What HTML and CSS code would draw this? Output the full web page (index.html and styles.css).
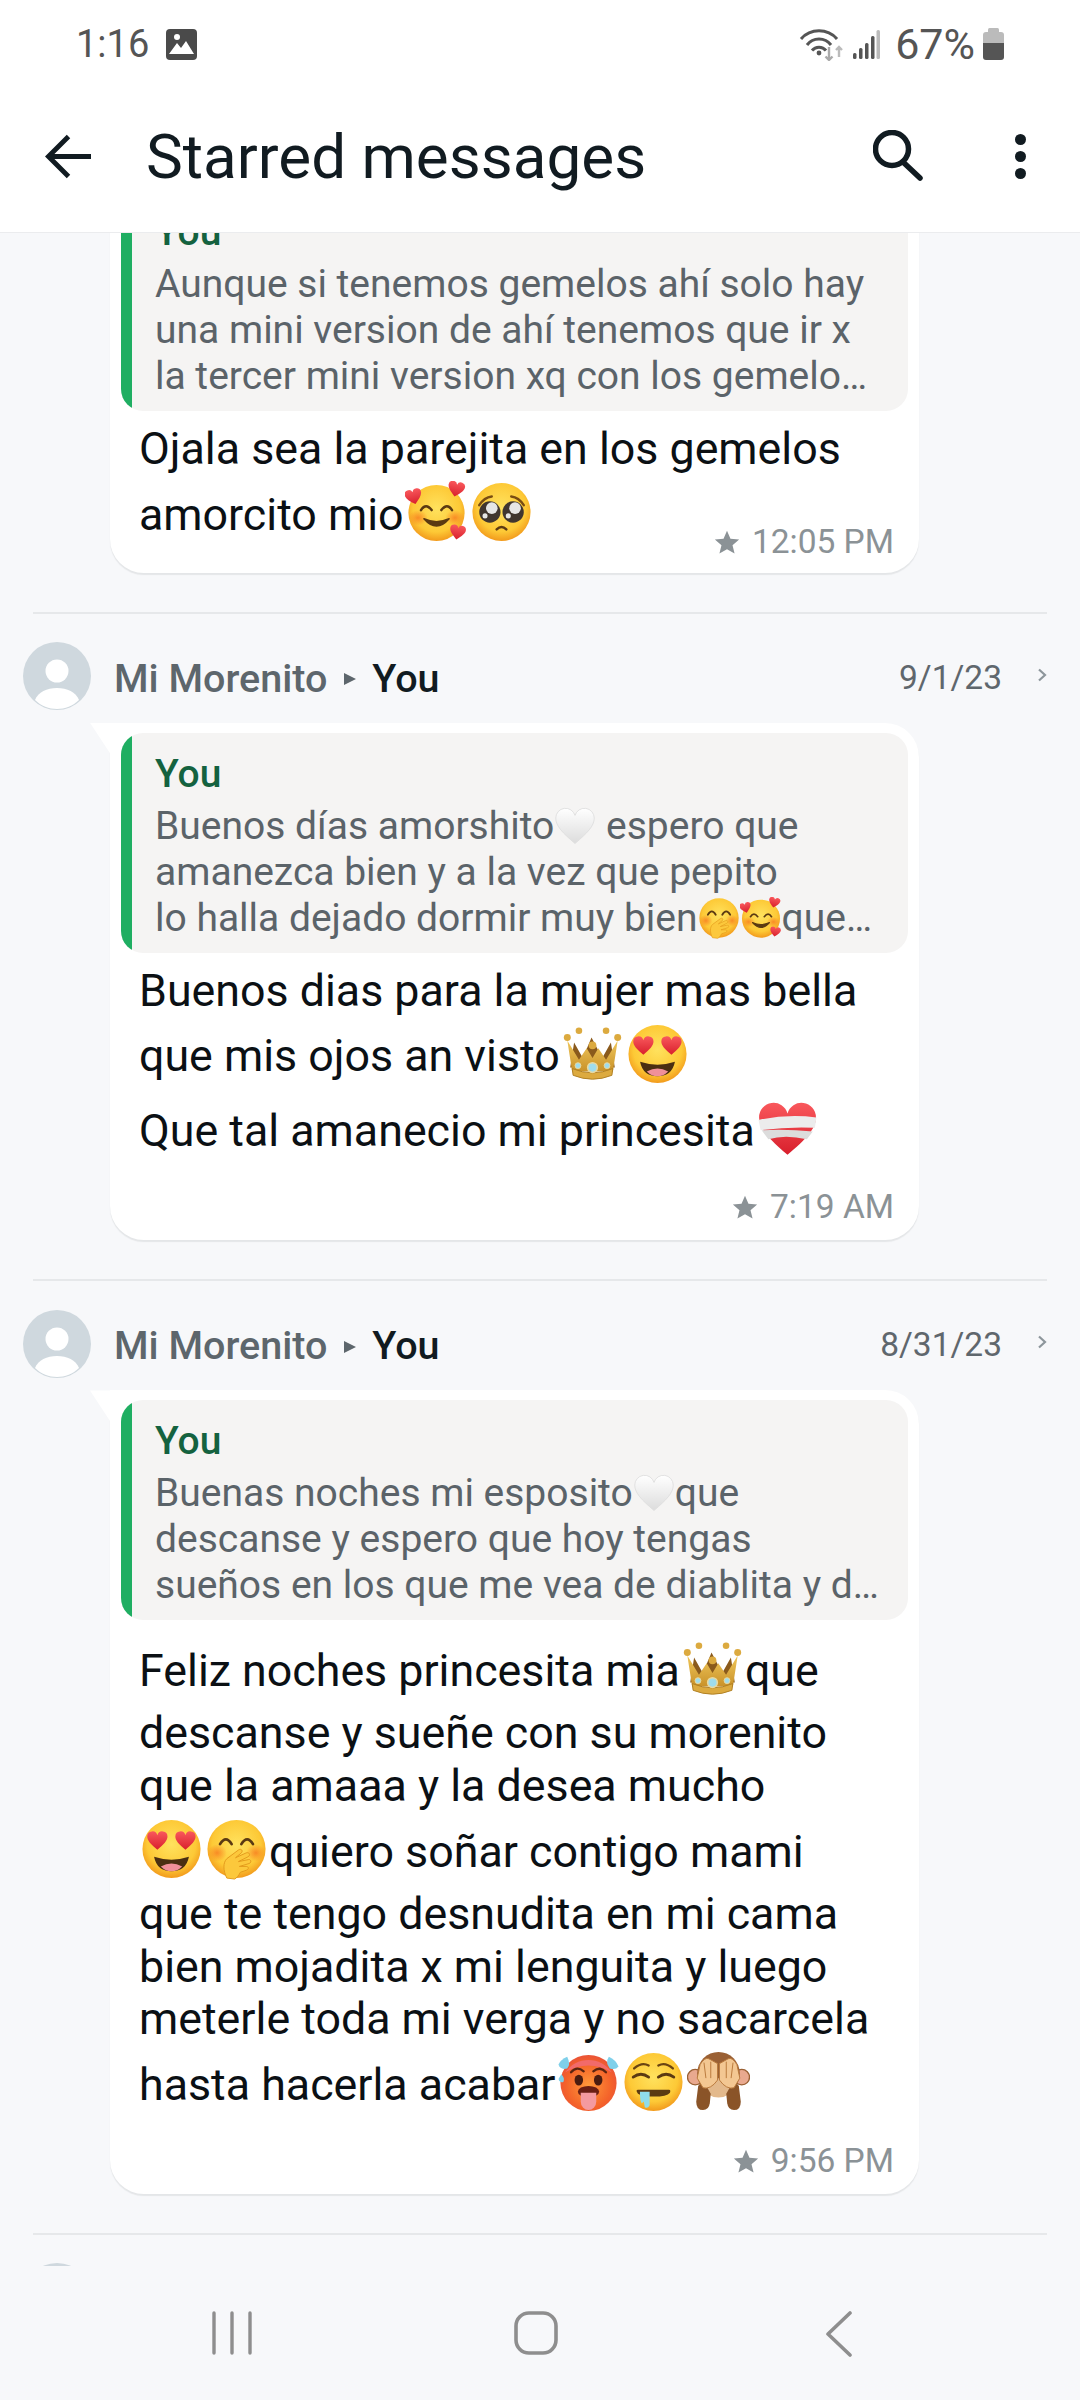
FILE: index.html
```html
<!DOCTYPE html>
<html lang="en">
<head>
    <meta charset="UTF-8">
    <meta name="viewport" content="width=device-width, initial-scale=1.0">
    <title>Starred messages</title>
    <link rel="stylesheet" href="styles.css">
</head>
<body>
    <!-- Shared emoji drawings -->
    <svg class="sprite" xmlns="http://www.w3.org/2000/svg" aria-hidden="true">
        <defs>
            <radialGradient id="face" cx="50%" cy="42%" r="58%">
                <stop offset="0" stop-color="#ffe25e"/>
                <stop offset="0.72" stop-color="#fdc936"/>
                <stop offset="1" stop-color="#f29a1c"/>
            </radialGradient>
            <radialGradient id="hot" cx="50%" cy="55%" r="58%">
                <stop offset="0" stop-color="#ff9a3a"/>
                <stop offset="0.7" stop-color="#f4622a"/>
                <stop offset="1" stop-color="#e8503a"/>
            </radialGradient>
            <radialGradient id="blush">
                <stop offset="0" stop-color="#f7761e" stop-opacity="0.75"/>
                <stop offset="1" stop-color="#f7761e" stop-opacity="0"/>
            </radialGradient>
            <linearGradient id="redHeart" x1="0" y1="0" x2="0" y2="1">
                <stop offset="0" stop-color="#f9585c"/>
                <stop offset="1" stop-color="#d81f2c"/>
            </linearGradient>
            <linearGradient id="whiteHeart" x1="0" y1="0" x2="0" y2="1">
                <stop offset="0" stop-color="#ffffff"/>
                <stop offset="1" stop-color="#dcdcdc"/>
            </linearGradient>
            <linearGradient id="gold" x1="0" y1="0" x2="0" y2="1">
                <stop offset="0" stop-color="#f0c75a"/>
                <stop offset="1" stop-color="#c9922a"/>
            </linearGradient>
            <path id="heartShape" d="M12 22C5 16 1 12 1 7.5A5.6 5.6 0 0 1 12 6A5.6 5.6 0 0 1 23 7.5C23 12 19 16 12 22Z"/>
            <path id="handShape" fill="#fcc83c" stroke="#e39a1c" stroke-width="1" d="M22 62C18 54 18 46 22 42L34 33C37 31 39 34 37 36L31 41L42 36C45 35 47 38 44 40L34 45L44 43C47 42 48 46 45 47L35 50L42 50C45 50 45 53 42 54L36 56C34 60 32 62 30 63Z"/>
        </defs>

        <symbol id="em-hearts" viewBox="0 0 64 64">
            <circle cx="32" cy="33" r="29" fill="url(#face)"/>
            <ellipse cx="13" cy="38" rx="10" ry="8" fill="url(#blush)"/>
            <ellipse cx="51" cy="38" rx="10" ry="8" fill="url(#blush)"/>
            <path d="M16 30Q21 22 27 30M37 30Q43 22 48 30" fill="none" stroke="#5b3a12" stroke-width="2.6" stroke-linecap="round"/>
            <path d="M19 39Q32 54 45 39Q32 45 19 39Z" fill="#5b3a12" stroke="#5b3a12" stroke-width="1.6" stroke-linejoin="round"/>
            <use href="#heartShape" fill="url(#redHeart)" transform="translate(-1 7) rotate(-14 9 9) scale(.78)"/>
            <use href="#heartShape" fill="url(#redHeart)" transform="translate(43 -1) rotate(12 9 9) scale(.78)"/>
            <use href="#heartShape" fill="url(#redHeart)" transform="translate(45 44) rotate(10 8 8) scale(.74)"/>
        </symbol>

        <symbol id="em-plead" viewBox="0 0 64 64">
            <circle cx="32" cy="32" r="30" fill="url(#face)"/>
            <path d="M9 25Q14 17 22 16M55 25Q50 17 42 16" fill="none" stroke="#7a4d12" stroke-width="2.4" stroke-linecap="round"/>
            <circle cx="20" cy="32" r="11" fill="#40362f"/>
            <circle cx="44" cy="32" r="11" fill="#40362f"/>
            <circle cx="22" cy="28" r="6" fill="#e6e6e6"/>
            <circle cx="46" cy="28" r="6" fill="#e6e6e6"/>
            <circle cx="15" cy="36" r="2.6" fill="#e6e6e6"/>
            <circle cx="39" cy="36" r="2.6" fill="#e6e6e6"/>
            <path d="M27 50Q32 45 37 50" fill="none" stroke="#5b3a12" stroke-width="2.6" stroke-linecap="round"/>
        </symbol>

        <symbol id="em-white" viewBox="0 0 24 24">
            <use href="#heartShape" fill="url(#whiteHeart)" stroke="#dedede" stroke-width=".5"/>
        </symbol>

        <symbol id="em-giggle" viewBox="0 0 64 64">
            <circle cx="32" cy="32" r="30" fill="url(#face)"/>
            <ellipse cx="12" cy="36" rx="10" ry="9" fill="url(#blush)"/>
            <ellipse cx="52" cy="36" rx="10" ry="9" fill="url(#blush)"/>
            <path d="M15 27Q21 17 27 27M37 27Q43 17 49 27" fill="none" stroke="#5b3a12" stroke-width="2.8" stroke-linecap="round"/>
            <use href="#handShape"/>
        </symbol>

        <symbol id="em-crown" viewBox="0 0 64 64">
            <path d="M13 20L22 36L31 15L42 36L51 20L55 46H9Z" fill="#8a5a1c"/>
            <path d="M6 18L18 38L26 26L32 36L38 26L46 38L58 18L53 50H11Z" fill="url(#gold)"/>
            <path d="M11 47Q32 56 53 47L52 54Q32 62 12 54Z" fill="#dcaa3f" stroke="#b07f22" stroke-width="1"/>
            <circle cx="6" cy="15" r="3.6" fill="#dcaa3f"/>
            <circle cx="58" cy="15" r="3.6" fill="#dcaa3f"/>
            <circle cx="18" cy="8" r="3.4" fill="#dcaa3f"/>
            <circle cx="46" cy="8" r="3.4" fill="#dcaa3f"/>
            <circle cx="32" cy="23" r="4" fill="#dcaa3f"/>
            <circle cx="32" cy="46" r="5" fill="#9fdcec" stroke="#e9d9a0" stroke-width="1.6"/>
            <circle cx="17" cy="44" r="3" fill="#9fdcec" stroke="#e9d9a0"/>
            <circle cx="47" cy="44" r="3" fill="#9fdcec" stroke="#e9d9a0"/>
        </symbol>

        <symbol id="em-eyes" viewBox="0 0 64 64">
            <circle cx="32" cy="32" r="30" fill="url(#face)"/>
            <use href="#heartShape" fill="url(#redHeart)" transform="translate(6 12) scale(.95)"/>
            <use href="#heartShape" fill="url(#redHeart)" transform="translate(35 12) scale(.95)"/>
            <path d="M14 40Q32 46 50 40Q47 55 32 55Q17 55 14 40Z" fill="#4a2f12"/>
            <path d="M21 50Q32 44 43 50Q38 55 32 55Q26 55 21 50Z" fill="#f0909a"/>
        </symbol>

        <symbol id="em-mend" viewBox="0 0 24 24">
            <use href="#heartShape" fill="url(#redHeart)"/>
            <path d="M.8 8.5Q12 6 23.2 7.5L22.6 11.5Q12 11 1.6 12.5Z" fill="#ececec"/>
            <path d="M2 12.5Q12 12 21.8 13L19.5 16Q11 14 4.6 16Z" fill="#dcdcdc"/>
        </symbol>

        <symbol id="em-hot" viewBox="0 0 64 64">
            <circle cx="32" cy="33" r="29" fill="url(#hot)"/>
            <path d="M8 22A29 29 0 0 1 56 22Q32 8 8 22Z" fill="#f26a6a"/>
            <path d="M14 22Q20 15 27 21M50 22Q44 15 37 21" fill="none" stroke="#5b2410" stroke-width="2.4" stroke-linecap="round"/>
            <ellipse cx="22" cy="30" rx="4.4" ry="5.6" fill="#4a1c10"/>
            <ellipse cx="42" cy="30" rx="4.4" ry="5.6" fill="#4a1c10"/>
            <ellipse cx="32" cy="42" rx="11" ry="6" fill="#6a1f14"/>
            <path d="M24 43H40V52A8 9 0 0 1 24 52Z" fill="#f49aa0"/>
            <path d="M10 6Q14 14 10 18Q3 20 1 14Q3 9 10 6Z" fill="#7fd0ea"/>
            <path d="M53 6Q60 9 63 16Q60 20 54 18Q49 12 53 6Z" fill="#7fd0ea"/>
            <path d="M4 24Q8 28 6 32Q2 33 1 29Z" fill="#7fd0ea"/>
        </symbol>

        <symbol id="em-drool" viewBox="0 0 64 64">
            <circle cx="32" cy="32" r="30" fill="url(#face)"/>
            <path d="M12 18Q20 11 27 15M52 18Q44 11 37 15" fill="none" stroke="#6a4412" stroke-width="2.4" stroke-linecap="round"/>
            <path d="M11 27Q19 21 27 27M37 27Q45 21 53 27" fill="none" stroke="#5b3a12" stroke-width="2.8" stroke-linecap="round"/>
            <path d="M16 40H48Q50 40 49 43Q46 47 32 47Q20 47 16 44Q13 40 16 40Z" fill="#5b3a12"/>
            <path d="M18 42H28V56Q26 60 23 58L22 52L20 54Q18 52 18 42Z" fill="#8fdcea"/>
        </symbol>

        <symbol id="em-monkey" viewBox="0 0 64 64">
            <circle cx="8" cy="27" r="8" fill="#e9a98f" stroke="#9a6034" stroke-width="1.4"/>
            <circle cx="56" cy="27" r="8" fill="#e9a98f" stroke="#9a6034" stroke-width="1.4"/>
            <circle cx="32" cy="23" r="22" fill="#9a6034"/>
            <ellipse cx="32" cy="38" rx="14" ry="10" fill="#e3b98c"/>
            <path d="M11 36L9 52Q9 61 16 61Q22 61 23 54L24 44L16 30Z" fill="#8a5428"/>
            <path d="M53 36L55 52Q55 61 48 61Q42 61 41 54L40 44L48 30Z" fill="#8a5428"/>
            <path d="M10 28L13 14Q18 6 22 8L31 13L31 30Q24 40 16 38Z" fill="#f3c792" stroke="#b9793c" stroke-width="1"/>
            <path d="M54 28L51 14Q46 6 42 8L33 13L33 30Q40 40 48 38Z" fill="#f3c792" stroke="#b9793c" stroke-width="1"/>
            <path d="M17 12L19 28M24 11L24 28M47 12L45 28M40 11L40 28" stroke="#b9793c" stroke-width="1"/>
        </symbol>

        <symbol id="star" viewBox="0 0 24 24">
            <path d="M12 1.5L15.2 8.9L23.2 9.6L17.1 14.9L19 22.7L12 18.6L5 22.7L6.9 14.9L.8 9.6L8.8 8.9Z"/>
        </symbol>

        <symbol id="person" viewBox="0 0 68 68">
            <circle cx="34" cy="34" r="34" fill="#cfd8de"/>
            <circle cx="34" cy="29" r="11.5" fill="#fff"/>
            <path d="M12 58C15 50 24 46 34 46C44 46 53 50 56 58C50 64 42 67 34 67C26 67 18 64 12 58Z" fill="#fff"/>
        </symbol>

        <symbol id="chev" viewBox="0 0 10 14">
            <path d="M2 1.5L8 7L2 12.5" fill="none" stroke="#8d969b" stroke-width="2.2"/>
        </symbol>
    </svg>

    <div class="app">
        <header class="topbar">
            <div class="status">
                <div class="status-left">
                    <span>1:16</span>
                    <svg class="status-pic" viewBox="0 0 31 31">
                        <rect width="31" height="31" rx="4" fill="#4a4a4a"/>
                        <path d="M3 25L11 14L15 19L20 12L28 25Z" fill="#fff"/>
                        <circle cx="11" cy="8" r="3" fill="#fff"/>
                    </svg>
                </div>
                <div class="status-right">
                    <svg class="status-wifi" viewBox="0 0 45 33" fill="none" stroke="#555" stroke-width="3">
                        <path d="M2 11A24 24 0 0 1 38 11"/>
                        <path d="M8 17A15 15 0 0 1 32 17"/>
                        <path d="M13 22.500A9 9 0 0 1 27 22.500"/>
                        <circle cx="20" cy="25" r="2.400" fill="#555" stroke="none"/>
                        <path d="M30 19V32M26.500 28.500L30 32L33.500 28.500" stroke="#aaa" stroke-width="2.400"/>
                        <path d="M40 29V19M37 22L40 19L43 22" stroke="#bbb" stroke-width="2.400"/>
                    </svg>
                    <svg class="status-signal" viewBox="0 0 27 29" fill="#555">
                        <rect x="0" y="23" width="3.500" height="6" rx="1.500"/>
                        <rect x="6" y="18" width="3.500" height="11" rx="1.500"/>
                        <rect x="12" y="13" width="3.500" height="16" rx="1.500"/>
                        <rect x="18" y="6" width="3.500" height="23" rx="1.500"/>
                        <rect x="23.500" y="0" width="3.500" height="29" rx="1.500" fill="#bbb"/>
                    </svg>
                    <span class="status-pct">67%</span>
                    <svg class="status-batt" viewBox="0 0 21 32">
                        <rect x="5" y="0" width="11" height="6" rx="1.500" fill="#bbb"/>
                        <path d="M0 7Q0 4 3 4H18Q21 4 21 7V15H0Z" fill="#bbb"/>
                        <path d="M0 15H21V29Q21 32 18 32H3Q0 32 0 29Z" fill="#555"/>
                    </svg>
                </div>
            </div>
            <div class="toolbar">
                <svg class="back-icon" viewBox="0 0 48 46" fill="none" stroke="#111b21" stroke-width="5">
                    <path d="M47 23H4M24 2.500L3.500 23L24 43.500"/>
                </svg>
                <h1 class="title">Starred messages</h1>
                <svg class="search-icon" viewBox="0 0 52 52" fill="none" stroke="#111b21" stroke-width="5.500">
                    <circle cx="19" cy="19" r="16.500"/>
                    <path d="M30 32L47 48" stroke-linecap="round"/>
                </svg>
                <div class="dots"><i></i><i></i><i></i></div>
            </div>
        </header>

        <main class="list">
            <section class="entry entry-first">
                <div class="bubble">
                    <div class="quote">
                        <div class="quote-bar"></div>
                        <div class="quote-body">
                            <div class="quote-name">You</div>
                            <div class="quote-text">Aunque si tenemos gemelos ahí solo hay<br>una mini version de ahí tenemos que ir x<br>la tercer mini version xq con los gemelo…</div>
                        </div>
                    </div>
                    <p class="msg">Ojala sea la parejita en los gemelos<br>amorcito mio<svg class="emoji"><use href="#em-hearts"/></svg><svg class="emoji"><use href="#em-plead"/></svg></p>
                    <div class="meta meta-tight"><svg class="meta-star"><use href="#star"/></svg>12:05 PM</div>
                </div>
            </section>
            <hr class="divider">

            <section class="entry">
                <div class="entry-head">
                    <svg class="avatar"><use href="#person"/></svg>
                    <span class="from">Mi Morenito</span>
                    <span class="arrow"></span>
                    <span class="to">You</span>
                    <span class="date">9/1/23</span>
                    <svg class="chev"><use href="#chev"/></svg>
                </div>
                <div class="bubble bubble-tail">
                    <div class="quote">
                        <div class="quote-bar"></div>
                        <div class="quote-body">
                            <div class="quote-name">You</div>
                            <div class="quote-text">Buenos días amorshito<svg class="emoji-sm"><use href="#em-white"/></svg> espero que<br>amanezca bien y a la vez que pepito<br>lo halla dejado dormir muy bien<svg class="emoji-sm"><use href="#em-giggle"/></svg><svg class="emoji-sm"><use href="#em-hearts"/></svg>que…</div>
                        </div>
                    </div>
                    <p class="msg">Buenos dias para la mujer mas bella<br>que mis ojos an visto<svg class="emoji"><use href="#em-crown"/></svg><svg class="emoji"><use href="#em-eyes"/></svg><br>Que tal amanecio mi princesita<svg class="emoji"><use href="#em-mend"/></svg></p>
                    <div class="meta"><svg class="meta-star"><use href="#star"/></svg>7:19 AM</div>
                </div>
            </section>
            <hr class="divider">

            <section class="entry">
                <div class="entry-head">
                    <svg class="avatar"><use href="#person"/></svg>
                    <span class="from">Mi Morenito</span>
                    <span class="arrow"></span>
                    <span class="to">You</span>
                    <span class="date">8/31/23</span>
                    <svg class="chev"><use href="#chev"/></svg>
                </div>
                <div class="bubble bubble-tail">
                    <div class="quote">
                        <div class="quote-bar"></div>
                        <div class="quote-body">
                            <div class="quote-name">You</div>
                            <div class="quote-text">Buenas noches mi esposito<svg class="emoji-sm"><use href="#em-white"/></svg>que<br>descanse y espero que hoy tengas<br>sueños en los que me vea de diablita y d…</div>
                        </div>
                    </div>
                    <p class="msg">Feliz noches princesita mia<svg class="emoji"><use href="#em-crown"/></svg>que<br>descanse y sueñe con su morenito<br>que la amaaa y la desea mucho<br><svg class="emoji"><use href="#em-eyes"/></svg><svg class="emoji"><use href="#em-giggle"/></svg>quiero soñar contigo mami<br>que te tengo desnudita en mi cama<br>bien mojadita x mi lenguita y luego<br>meterle toda mi verga y no sacarcela<br>hasta hacerla acabar<svg class="emoji"><use href="#em-hot"/></svg><svg class="emoji"><use href="#em-drool"/></svg><svg class="emoji"><use href="#em-monkey"/></svg></p>
                    <div class="meta"><svg class="meta-star"><use href="#star"/></svg>9:56 PM</div>
                </div>
            </section>
            <hr class="divider">

            <section class="entry">
                <div class="entry-head">
                    <svg class="avatar"><use href="#person"/></svg>
                </div>
            </section>
        </main>

        <nav class="navbar">
            <svg class="nav-recents" viewBox="0 0 40 44" fill="none" stroke="#8e8e8e" stroke-width="3.400" stroke-linecap="round">
                <path d="M2 2V42M20 2V42M38 2V42"/>
            </svg>
            <svg class="nav-home" viewBox="0 0 44 44" fill="none" stroke="#8e8e8e" stroke-width="3.600">
                <rect x="2" y="2" width="40" height="40" rx="13"/>
            </svg>
            <svg class="nav-back" viewBox="0 0 28 46" fill="none" stroke="#8e8e8e" stroke-width="3.600" stroke-linecap="round" stroke-linejoin="round">
                <path d="M25 2L3 23L25 44"/>
            </svg>
        </nav>
    </div>
</body>
</html>
```

FILE: styles.css
```css
/* General Styles */
* {
    box-sizing: border-box;
}

body {
    margin: 0;
    background: #f7f8fa;
    font-family: Roboto, "Noto Sans", sans-serif;
    color: #0b1014;
}

.sprite {
    display: block;
    width: 0;
    height: 0;
}

.app {
    width: 1080px;
    height: 2400px;
    display: flex;
    flex-direction: column;
    overflow: hidden;
}

/* Top bar */
.topbar {
    height: 233px;
    flex: none;
    background: #fff;
    border-bottom: 1px solid #ebecee;
}

.status {
    height: 88px;
    padding: 0 76px;
    display: flex;
    align-items: center;
    justify-content: space-between;
    font-size: 38px;
    color: #555;
}

.status-left {
    display: flex;
    align-items: center;
    gap: 17px;
}

.status-pic {
    width: 31px;
    height: 31px;
}

.status-right {
    display: flex;
    align-items: center;
}

.status-wifi {
    width: 45px;
    height: 33px;
}

.status-signal {
    width: 27px;
    height: 29px;
    margin-left: 9px;
}

.status-pct {
    margin-left: 15px;
    font-size: 43px;
}

.status-batt {
    width: 21px;
    height: 32px;
    margin-left: 8px;
}

.toolbar {
    height: 130px;
    padding: 6px 54px 0 45px;
    display: flex;
    align-items: center;
}

.back-icon {
    width: 47px;
    height: 45px;
}

.title {
    margin: 0 0 0 54px;
    flex: 1;
    font-size: 62px;
    font-weight: 400;
    color: #111b21;
}

.search-icon {
    width: 52px;
    height: 52px;
    margin-right: 90px;
}

.dots {
    display: flex;
    flex-direction: column;
    gap: 6px;
}

.dots i {
    display: block;
    width: 11px;
    height: 11px;
    border-radius: 50%;
    background: #111b21;
}

/* Message list */
.list {
    flex: 1;
    min-height: 0;
    overflow: hidden;
}

.entry {
    padding: 29px 0 39px;
}

.entry-first {
    margin-top: -52px;
    padding-top: 0;
}

.divider {
    margin: 0 33px;
    border: 0;
    border-top: 2px solid #e6e8ea;
}

.entry-head {
    height: 67px;
    margin-bottom: 13px;
    padding: 0 33px 0 23px;
    display: flex;
    align-items: center;
    font-size: 39.5px;
    font-weight: 500;
}

.avatar {
    width: 68px;
    height: 68px;
    margin-right: 23px;
}

.from {
    margin-top: 4px;
    color: #5d666c;
}

.arrow {
    width: 0;
    height: 0;
    margin: 6px 16px 0 17px;
    border-left: 12px solid #5d666c;
    border-top: 6px solid transparent;
    border-bottom: 6px solid transparent;
}

.to {
    flex: 1;
    margin-top: 4px;
    color: #111b21;
}

.date {
    margin-top: 2px;
    font-size: 33.5px;
    font-weight: 400;
    color: #5f676d;
}

.chev {
    width: 10px;
    height: 14px;
    margin: 0 0 3px 35px;
}

/* Bubble */
.bubble {
    position: relative;
    width: 809px;
    margin-left: 110px;
    padding: 10px 11px 13px;
    background: #fff;
    border-radius: 0 34px 34px 34px;
    box-shadow: 0 2px 1px #e4e6e8;
}

.bubble-tail::before {
    content: "";
    position: absolute;
    top: 0;
    left: -20px;
    width: 21px;
    height: 32px;
    background: #fff;
    clip-path: polygon(0 0, 100% 0, 100% 100%);
}

.quote {
    display: flex;
    height: 220px;
    background: #f5f4f3;
    border-radius: 22px;
    overflow: hidden;
}

.quote-bar {
    width: 11px;
    flex: none;
    background: #1fae62;
}

.quote-body {
    padding: 18px 0 12px 23px;
    min-width: 0;
}

.quote-name {
    margin-bottom: 6px;
    font-size: 39px;
    font-weight: 500;
    line-height: 46px;
    color: #14623f;
}

.quote-text {
    font-size: 39px;
    line-height: 46px;
    color: #5b6369;
    white-space: nowrap;
}

.msg {
    margin: 12px 0 0;
    padding-left: 18px;
    font-size: 44.75px;
    line-height: 52.7px;
    white-space: nowrap;
}

.emoji {
    width: 63px;
    height: 62px;
    margin: 5.5px 1px 7.5px;
    vertical-align: -21.5px;
}

.emoji-sm {
    width: 42px;
    height: 42px;
    vertical-align: -8px;
}

.meta {
    margin-top: 20px;
    padding-right: 14px;
    display: flex;
    align-items: center;
    justify-content: flex-end;
    font-size: 33.5px;
    line-height: 40px;
    color: #8b9296;
}

.meta-tight {
    margin: -29px 0 -2px;
}

.meta-star {
    width: 26px;
    height: 26px;
    margin-right: 12px;
    fill: #8b9296;
}

/* Navigation bar */
.navbar {
    height: 134px;
    flex: none;
    display: flex;
    align-items: flex-start;
    padding: 45px 0 0 212px;
    background: #f7f8fa;
}

.nav-recents {
    width: 40px;
    height: 44px;
}

.nav-home {
    width: 44px;
    height: 44px;
    margin-left: 262px;
}

.nav-back {
    width: 28px;
    height: 46px;
    margin-left: 267px;
}
```
